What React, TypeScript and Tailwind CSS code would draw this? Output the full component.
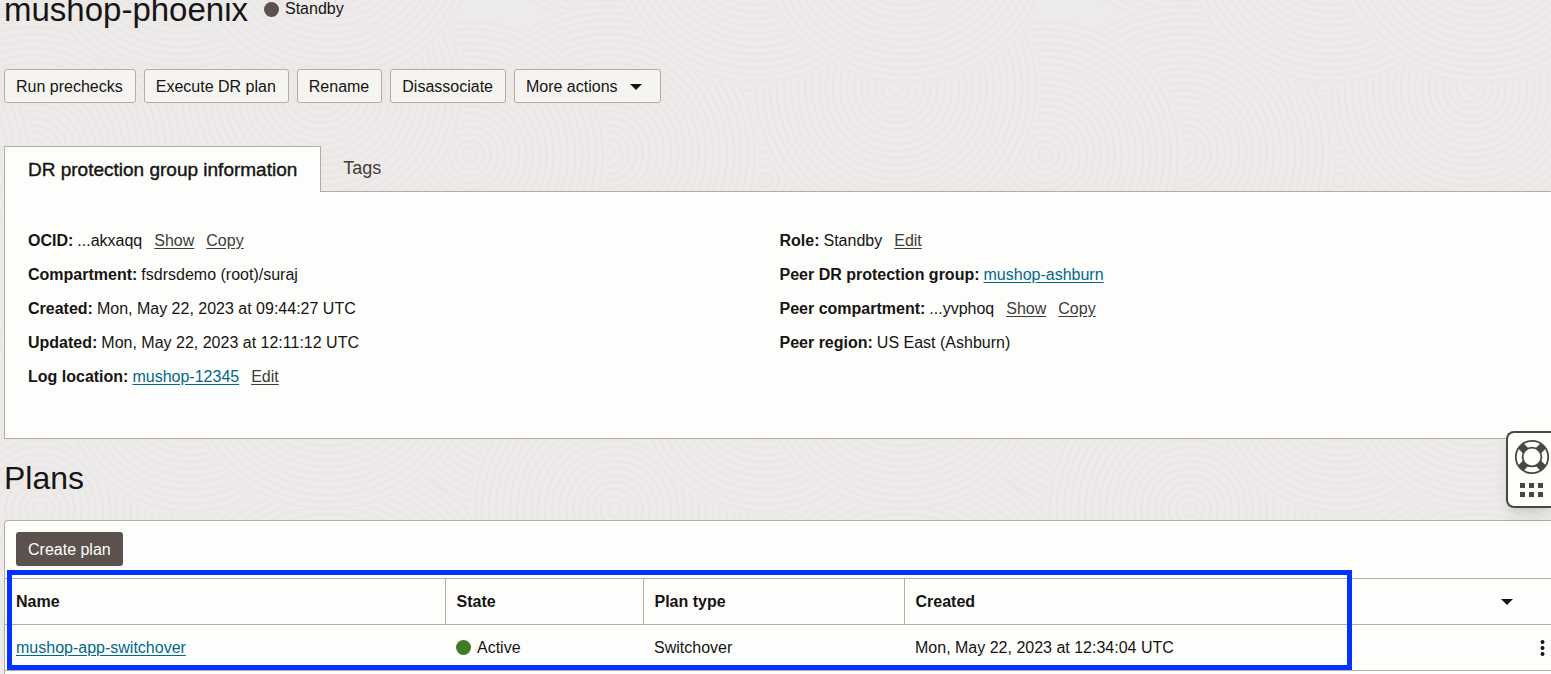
import React from "react";

type Disc = [number, number, number];

const TILE = 575;

const discs: Disc[] = [
  [477, 180, 150],
  [320, -125, 148],
  [320, 153, 150],
  [182, 155, 138],
  [33, 88, 144],
  [467, -65, 150],
  [42, -65, 150],
  [230, 370, 150],
  [40, 640, 190],
  [327, 510, 144],
  [477, 385, 132],
  [40, 362, 150],
  [200, 640, 120],
];

function Backdrop() {
  return (
    <svg aria-hidden="true" className="absolute inset-0 -z-10 h-full w-full">
      <defs>
        <pattern id="rings" width={TILE} height="760" patternUnits="userSpaceOnUse" x="288">
          <rect width={TILE} height="760" fill="#edebea" />
          {discs.map(([x, y, r], i) =>
            [x - TILE, x, x + TILE].map((cx) => (
              <g key={`${i}:${cx}`}>
                <circle cx={cx} cy={y} r={r} fill="#edebea" />
                {Array.from({ length: Math.floor(r / 7) }, (_, n) => (
                  <circle key={n} cx={cx} cy={y} r={(n + 1) * 7} fill="none" stroke="#e9e6e5" strokeWidth="2" />
                ))}
              </g>
            )),
          )}
        </pattern>
      </defs>
      <rect width="100%" height="100%" fill="url(#rings)" />
    </svg>
  );
}

function Caret() {
  return (
    <svg aria-hidden="true" width="12" height="6" viewBox="0 0 12 6" className="fill-[#161513]">
      <path d="M0 0h12L6 6z" />
    </svg>
  );
}

function ActionButton({ children }: { children: React.ReactNode }) {
  return (
    <button className="flex h-[34px] items-center rounded-[3px] border border-[#b5aca6] bg-[#f6f4f1] pt-px pr-3 pl-[11px] whitespace-nowrap">
      {children}
    </button>
  );
}

function Field({ label, children }: { label: string; children: React.ReactNode }) {
  return (
    <div className="flex">
      <dt className="mr-1 font-bold">{label}:</dt>
      <dd className="flex gap-3">{children}</dd>
    </div>
  );
}

function Action({ children }: { children: React.ReactNode }) {
  return (
    <a href="#" className="text-[#3f3b38] underline underline-offset-2">
      {children}
    </a>
  );
}

function Link({ children }: { children: React.ReactNode }) {
  return (
    <a href="#" className="text-[#00688c] underline underline-offset-2">
      {children}
    </a>
  );
}

function HelpWidget() {
  return (
    <button
      aria-label="Help"
      className="absolute top-[431px] right-0 flex h-[77px] w-[45px] flex-col items-center gap-2 rounded-l-lg border-2 border-r-0 border-[#4b4644] bg-[#fdfdfc] pt-[6px] pl-1 shadow-lg"
    >
      <svg aria-hidden="true" width="36" height="36" viewBox="0 0 36 36" fill="none" stroke="#4b4644" className="shrink-0">
        <path d="M6.8 6.8l5 5M29.2 6.8l-5 5M6.8 29.2l5-5M29.2 29.2l-5-5" strokeWidth="7.5" />
        <circle cx="18" cy="18" r="16.2" strokeWidth="1.8" />
        <circle cx="18" cy="18" r="9.4" strokeWidth="1.8" fill="#fdfdfc" />
      </svg>
      <svg aria-hidden="true" width="24" height="14" viewBox="0 0 24 14" fill="#4b4644" className="shrink-0">
        <path d="M0 0h5v5H0zM9 0h5v5H9zM18 0h5v5h-5zM0 9h5v5H0zM9 9h5v5H9zM18 9h5v5h-5z" />
      </svg>
    </button>
  );
}

export default function App() {
  return (
    <div className="relative isolate min-h-screen overflow-hidden bg-[#edebea] pl-1 font-['Liberation_Sans',Arial,sans-serif] text-base leading-5 text-[#161513]">
      <Backdrop />
      <header className="flex h-[69px] items-start gap-4">
        <h1 className="-mt-[10px] text-[33px] leading-10">mushop-phoenix</h1>
        <p className="-mt-px flex items-center gap-[6px]">
          <span className="size-[15px] rounded-full bg-[#5b524e]" />
          Standby
        </p>
      </header>

      <div className="flex gap-2">
        <ActionButton>Run prechecks</ActionButton>
        <ActionButton>Execute DR plan</ActionButton>
        <ActionButton>Rename</ActionButton>
        <ActionButton>Disassociate</ActionButton>
        <ActionButton>
          <span className="mr-3">More actions</span>
          <span className="mr-[6px]">
            <Caret />
          </span>
        </ActionButton>
      </div>

      <div role="tablist" className="mt-[43px] flex">
        <button
          role="tab"
          aria-selected="true"
          className="z-10 -mb-px h-[46px] border border-b-0 border-[#b5aca6] bg-[#fdfdfc] px-[23px] text-[19px] [-webkit-text-stroke:0.4px_#161513]"
        >
          DR protection group information
        </button>
        <button role="tab" aria-selected="false" className="h-[45px] px-[22px] pb-[2px] text-lg text-[#3f3b38]">
          Tags
        </button>
      </div>
      <section className="grid h-[248px] grid-cols-2 border border-r-0 border-[#b5aca6] bg-[#fdfdfc] pt-[39px] pl-[23px]">
        <dl className="flex flex-col gap-[14px]">
          <Field label="OCID">
            <span>...akxaqq</span>
            <Action>Show</Action>
            <Action>Copy</Action>
          </Field>
          <Field label="Compartment">fsdrsdemo (root)/suraj</Field>
          <Field label="Created">Mon, May 22, 2023 at 09:44:27 UTC</Field>
          <Field label="Updated">Mon, May 22, 2023 at 12:11:12 UTC</Field>
          <Field label="Log location">
            <Link>mushop-12345</Link>
            <Action>Edit</Action>
          </Field>
        </dl>
        <dl className="-ml-[10px] flex flex-col gap-[14px]">
          <Field label="Role">
            <span>Standby</span>
            <Action>Edit</Action>
          </Field>
          <Field label="Peer DR protection group">
            <Link>mushop-ashburn</Link>
          </Field>
          <Field label="Peer compartment">
            <span>...yvphoq</span>
            <Action>Show</Action>
            <Action>Copy</Action>
          </Field>
          <Field label="Peer region">US East (Ashburn)</Field>
        </dl>
      </section>

      <h2 className="mt-[19px] mb-[22px] text-[32px] leading-10">Plans</h2>

      <section className="rounded-tl border-t border-l border-[#b5aca6] bg-[#fdfdfc]">
        <div className="px-[11px] pt-[11px] pb-3">
          <button className="h-[34px] rounded-[3px] bg-[#5b524e] px-3 pt-px text-white">Create plan</button>
        </div>
        <div className="relative">
          <table className="w-full table-fixed border-collapse text-left">
            <colgroup>
              <col className="w-[440px]" />
              <col className="w-[198px]" />
              <col className="w-[261px]" />
              <col />
              <col className="w-[70px]" />
            </colgroup>
            <thead>
              <tr className="h-[46px] border-y border-[#b5aca6]">
                <th className="border-r border-[#b5aca6] px-[11px]">Name</th>
                <th className="border-r border-[#b5aca6] px-[11px]">State</th>
                <th className="border-r border-[#b5aca6] px-[11px]">Plan type</th>
                <th className="px-[11px]">Created</th>
                <th className="pl-5">
                  <button aria-label="Sort by created" className="flex">
                    <Caret />
                  </button>
                </th>
              </tr>
            </thead>
            <tbody>
              <tr className="h-[46px] border-b border-[#b5aca6]">
                <td className="px-[11px]">
                  <Link>mushop-app-switchover</Link>
                </td>
                <td className="px-[11px]">
                  <span className="flex items-center gap-[6px]">
                    <span className="size-[15px] rounded-full bg-[#427a26]" />
                    Active
                  </span>
                </td>
                <td className="px-[11px]">Switchover</td>
                <td className="px-[11px]">Mon, May 22, 2023 at 12:34:04 UTC</td>
                <td className="pr-[6px]">
                  <button aria-label="Row actions" className="ml-auto flex">
                    <svg aria-hidden="true" width="5" height="16" viewBox="0 0 5 16" fill="#161513">
                      <circle cx="2.5" cy="2" r="2" />
                      <circle cx="2.5" cy="8" r="2" />
                      <circle cx="2.5" cy="14" r="2" />
                    </svg>
                  </button>
                </td>
              </tr>
            </tbody>
          </table>
          <div className="pointer-events-none absolute -top-2 right-[199px] left-[2px] h-[100px] border-5 border-[#0433ff]" />
        </div>
        <div className="h-1" />
      </section>
      <HelpWidget />
    </div>
  );
}
